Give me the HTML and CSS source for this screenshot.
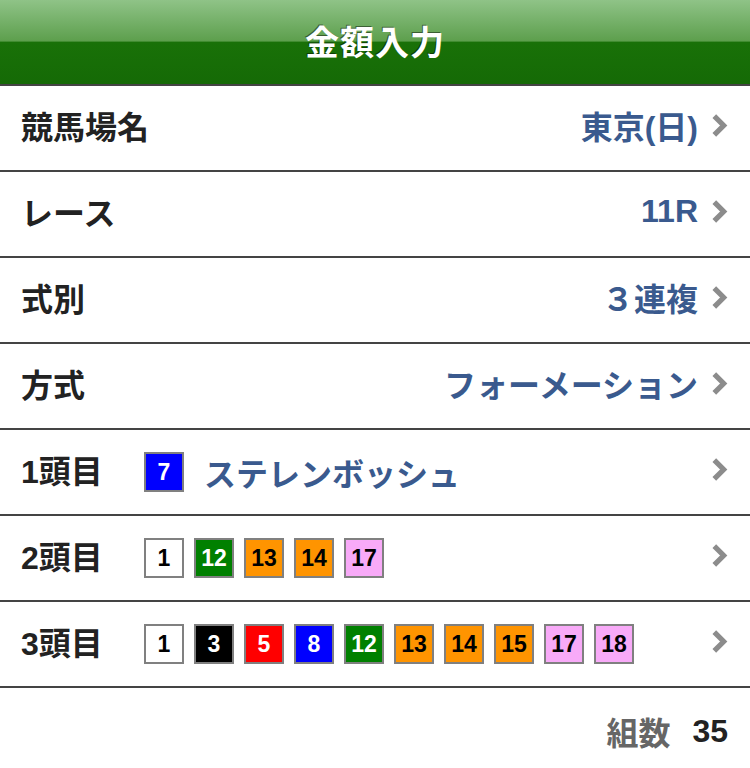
FILE: index.html
```html
<!DOCTYPE html>
<html lang="ja">
<head>
  <meta charset="UTF-8">
  <title>金額入力</title>
  <meta name="viewport" content="width=device-width, initial-scale=1.0">
  <link rel="stylesheet" href="styles.css">
</head>
<body>
  <header class="title-bar">
    <h1>金額入力</h1>
  </header>

  <ul class="form-list">
    <li class="form-row">
      <span class="row-label">競馬場名</span>
      <span class="row-value">東京(日)</span>
      <svg class="chevron" viewBox="0 0 16 24"><polyline points="3,3 12,12 3,21"/></svg>
    </li>
    <li class="form-row">
      <span class="row-label">レース</span>
      <span class="row-value">11R</span>
      <svg class="chevron" viewBox="0 0 16 24"><polyline points="3,3 12,12 3,21"/></svg>
    </li>
    <li class="form-row">
      <span class="row-label">式別</span>
      <span class="row-value">３連複</span>
      <svg class="chevron" viewBox="0 0 16 24"><polyline points="3,3 12,12 3,21"/></svg>
    </li>
    <li class="form-row">
      <span class="row-label">方式</span>
      <span class="row-value">フォーメーション</span>
      <svg class="chevron" viewBox="0 0 16 24"><polyline points="3,3 12,12 3,21"/></svg>
    </li>
    <li class="form-row">
      <span class="row-label">1頭目</span>
      <div class="horses">
        <span class="num waku4">7</span>
        <span class="horse-name">ステレンボッシュ</span>
      </div>
      <svg class="chevron" viewBox="0 0 16 24"><polyline points="3,3 12,12 3,21"/></svg>
    </li>
    <li class="form-row">
      <span class="row-label">2頭目</span>
      <div class="horses">
        <span class="num waku1">1</span>
        <span class="num waku6">12</span>
        <span class="num waku7">13</span>
        <span class="num waku7">14</span>
        <span class="num waku8">17</span>
      </div>
      <svg class="chevron" viewBox="0 0 16 24"><polyline points="3,3 12,12 3,21"/></svg>
    </li>
    <li class="form-row">
      <span class="row-label">3頭目</span>
      <div class="horses">
        <span class="num waku1">1</span>
        <span class="num waku2">3</span>
        <span class="num waku3">5</span>
        <span class="num waku4">8</span>
        <span class="num waku6">12</span>
        <span class="num waku7">13</span>
        <span class="num waku7">14</span>
        <span class="num waku7">15</span>
        <span class="num waku8">17</span>
        <span class="num waku8">18</span>
      </div>
      <svg class="chevron" viewBox="0 0 16 24"><polyline points="3,3 12,12 3,21"/></svg>
    </li>
  </ul>

  <div class="total">
    <span class="total-label">組数</span>
    <span class="total-value">35</span>
  </div>
</body>
</html>
```

FILE: styles.css
```css
body {
  margin: 0;
  background: #fff;
  font-family: "Liberation Sans", "Noto Sans CJK JP", sans-serif;
  color: #222;
}
.title-bar {
  height: 84px;
  border-bottom: 2px solid #444;
  background: linear-gradient(to bottom, #8fc387 0%, #5d9f4d 49%, #197108 50%, #156a06 100%);
  display: flex;
  align-items: center;
  justify-content: center;
}
.title-bar h1 {
  margin: 0 0 4px 0;
  font-family: "Noto Sans CJK JP", sans-serif;
  font-size: 34px;
  font-weight: 700;
  color: #fff;
  letter-spacing: 1px;
  text-shadow: -1px -1px 0 rgba(0,0,0,0.45);
}
.form-list {
  margin: 0;
  padding: 0;
  list-style: none;
}
.form-row {
  height: 78px;
  border-bottom: 2px solid #444;
  display: flex;
  align-items: center;
  padding: 0 22px 6px 21px;
}
.row-label {
  min-width: 123px;
  flex-shrink: 0;
  white-space: nowrap;
  font-size: 32px;
  font-weight: 700;
  color: #222;
}
.row-value {
  margin-left: auto;
  white-space: nowrap;
  font-size: 32px;
  font-weight: 700;
  color: #3a5a8e;
}
.chevron {
  width: 17px;
  height: 25px;
  margin-left: 13px;
  flex-shrink: 0;
  fill: none;
  stroke: #8c8c8c;
  stroke-width: 5;
}
.horses {
  display: flex;
  align-items: center;
  gap: 10px;
  flex: 1;
  padding-top: 6px;
}
.num {
  width: 36px;
  height: 36px;
  border: 2px solid #808080;
  display: flex;
  align-items: center;
  justify-content: center;
  font-size: 23px;
  font-weight: 700;
  color: #000;
}
.waku1 { background: #fff; }
.waku2 { background: #000; color: #fff; }
.waku3 { background: #f00; color: #fff; }
.waku4 { background: #00f; color: #fff; }
.waku6 { background: #008000; color: #fff; }
.waku7 { background: #ff9400; }
.waku8 { background: #f8aaf8; }
.horse-name {
  margin-left: 10px;
  font-size: 32px;
  font-weight: 700;
  color: #3a5a8e;
}
.total {
  display: flex;
  justify-content: flex-end;
  align-items: center;
  gap: 22px;
  padding: 20px 22px 0 0;
  font-size: 32px;
  font-weight: 700;
}
.total-label {
  color: #666;
}
.total-value {
  color: #222;
}
```
